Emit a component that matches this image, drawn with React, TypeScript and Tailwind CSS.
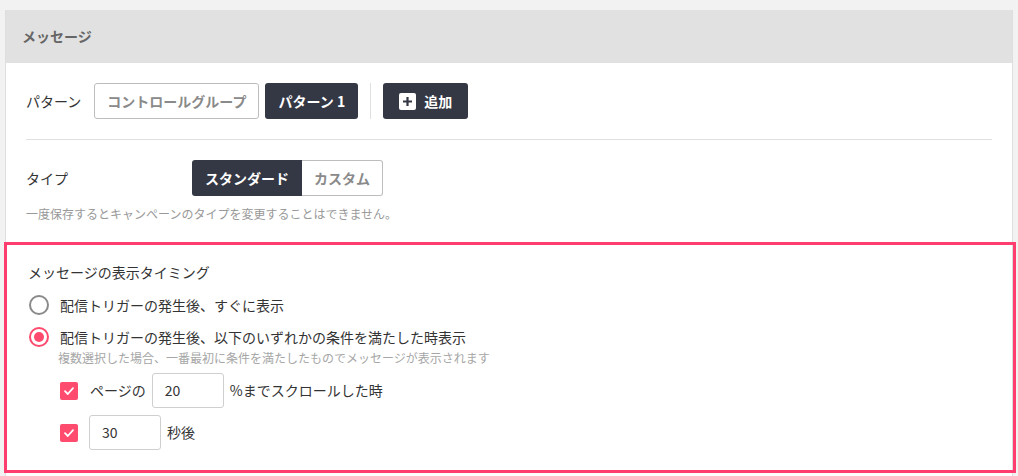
import React from "react";

const font = { fontFamily: '"Noto Sans CJK JP", "Noto Sans", sans-serif' };

function Radio({ checked }: { checked?: boolean }) {
  return checked ? (
    <span className="flex h-[20px] w-[20px] shrink-0 items-center justify-center rounded-full border-2 border-[#ff4a6e]">
      <span className="h-[10px] w-[10px] rounded-full bg-[#ff4a6e]" />
    </span>
  ) : (
    <span className="h-[20px] w-[20px] shrink-0 rounded-full border-2 border-[#8a8a8a]" />
  );
}

function Check() {
  return (
    <span className="flex h-[18px] w-[18px] shrink-0 items-center justify-center rounded-[2px] bg-[#ff4b6e]">
      <svg width="12" height="12" viewBox="0 0 12 12" fill="none">
        <path d="M2 6.2 4.8 9 10 3.2" stroke="#fff" strokeWidth="1.8" strokeLinecap="round" strokeLinejoin="round" />
      </svg>
    </span>
  );
}

function NumBox({ value }: { value: string }) {
  return (
    <div className="flex h-[35px] w-[72px] items-center rounded-[3px] border border-[#cfcfcf] bg-white px-[12px] text-[14px] text-[#333]">
      {value}
    </div>
  );
}

export default function App() {
  return (
    <div className="min-h-[476px] bg-[#f2f2f2] pl-[5px] pt-[10px] text-[#333]" style={font}>
      <div className="w-[1008px] border-x border-[#dedede] bg-white">
        {/* Header */}
        <div className="flex h-[53px] items-center bg-[#e1e1e1] px-[16px] text-[14px] font-bold text-[#666]">
          メッセージ
        </div>

        <div className="px-[20px] pt-[20px]">
          {/* Pattern row */}
          <div className="flex items-center">
            <span className="mr-[13px] text-[14px]">パターン</span>
            <button className="h-[36px] rounded-[3px] border border-[#bdbdbd] bg-white px-[12px] text-[14px] font-bold text-[#8a8a8a]">
              コントロールグループ
            </button>
            <button className="ml-[6px] h-[36px] rounded-[3px] bg-[#343744] px-[13px] text-[14px] font-bold text-white">
              パターン 1
            </button>
            <div className="mx-[12px] h-[36px] w-px bg-[#e0e0e0]" />
            <button className="flex h-[36px] items-center gap-[8px] rounded-[3px] bg-[#343744] px-[16px] text-[14px] font-bold text-white">
              <span className="flex h-[17px] w-[17px] items-center justify-center rounded-[2px] bg-white">
                <svg width="11" height="11" viewBox="0 0 11 11">
                  <path d="M5.5 1v9M1 5.5h9" stroke="#343744" strokeWidth="2.2" />
                </svg>
              </span>
              追加
            </button>
          </div>

          <div className="mt-[20px] h-px bg-[#e0e0e0]" />

          {/* Type row */}
          <div className="mt-[20px] flex items-center">
            <span className="w-[166px] text-[14px]">タイプ</span>
            <div className="flex h-[36px]">
              <button className="rounded-l-[3px] bg-[#343744] px-[13px] text-[14px] font-bold text-white">
                スタンダード
              </button>
              <button className="rounded-r-[3px] border border-l-0 border-[#bdbdbd] bg-white px-[12px] text-[14px] font-bold text-[#8a8a8a]">
                カスタム
              </button>
            </div>
          </div>
          <p className="mt-[9px] text-[12px] leading-[18px] text-[#999]">
            一度保存するとキャンペーンのタイプを変更することはできません。
          </p>

          {/* Timing section */}
          <section className="-ml-[22px] -mr-[24px] mt-[19px] border-[3px] border-[#ff3d6f] pb-[20px] pl-[21px] pt-[17px]">
            <h3 className="text-[14px] leading-[20px]">メッセージの表示タイミング</h3>
            <label className="mt-[13px] flex items-center gap-[11px] pl-[1px] text-[14px] leading-[20px]">
              <Radio />
              配信トリガーの発生後、すぐに表示
            </label>
            <label className="mt-[12px] flex items-center gap-[11px] pl-[1px] text-[14px] leading-[20px]">
              <Radio checked />
              配信トリガーの発生後、以下のいずれかの条件を満たした時表示
            </label>
            <p className="mt-[3px] pl-[30px] text-[12px] leading-[16px] text-[#a6a6a6]">
              複数選択した場合、一番最初に条件を満たしたものでメッセージが表示されます
            </p>
            <div className="mt-[7px] flex items-center pl-[32px] text-[14px]">
              <Check />
              <span className="ml-[12px] mr-[6px]">ページの</span>
              <NumBox value="20" />
              <span className="ml-[6px]">%までスクロールした時</span>
            </div>
            <div className="mt-[7px] flex items-center pl-[32px] text-[14px]">
              <Check />
              <span className="ml-[11px]" />
              <NumBox value="30" />
              <span className="ml-[6px]">秒後</span>
            </div>
          </section>
          <div className="h-[20px]" />
        </div>
      </div>
    </div>
  );
}
